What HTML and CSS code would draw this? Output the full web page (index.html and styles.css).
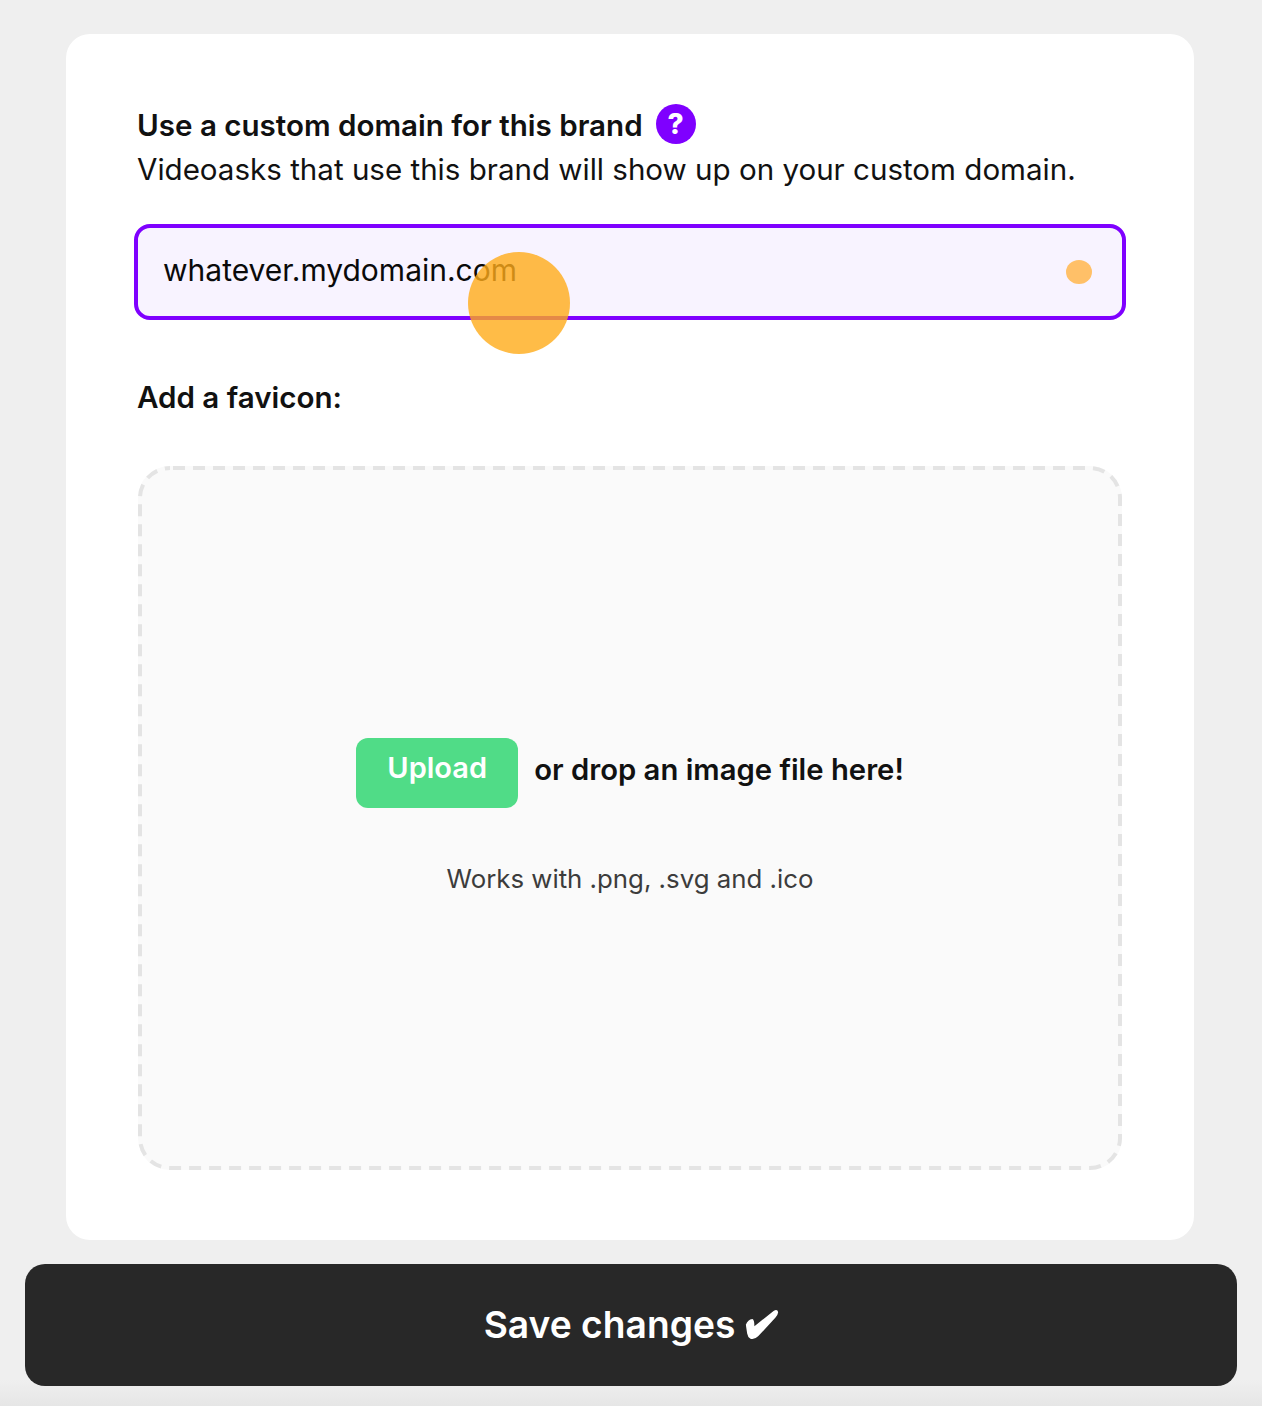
FILE: index.html
```html
<!DOCTYPE html>
<html lang="en">
<head>
<meta charset="utf-8">
<title>Custom domain</title>
<link rel="stylesheet" href="styles.css">
</head>
<body>
<main class="page">
  <section class="card">
    <div class="title-row">
      <h2 class="label">Use a custom domain for this brand</h2>
      <span class="help">?</span>
    </div>
    <p class="desc">Videoasks that use this brand will show up on your custom domain.</p>
    <div class="input-wrap">
      <div class="input">
        <span class="input-text">whatever.mydomain.com</span>
        <span class="dot"></span>
      </div>
      <span class="touch"></span>
    </div>
    <h2 class="label favicon">Add a favicon:</h2>
    <div class="drop">
      <svg class="drop-border" width="984" height="704" viewBox="0 0 984 704" aria-hidden="true">
        <rect x="2" y="2" width="980" height="700" rx="30" ry="30"></rect>
      </svg>
      <div class="drop-row">
        <button class="upload" type="button">Upload</button>
        <span class="drop-text">or drop an image file here!</span>
      </div>
      <p class="hint">Works with .png, .svg and .ico</p>
    </div>
  </section>
  <button class="save" type="button">Save changes<svg class="check" width="34" height="31" viewBox="30 26 102 94" aria-hidden="true"><path d="M32 74 Q38 58 52 56 Q58 58 58 78 L116 32 Q128 25 130 36 Q129 44 122 52 L70 108 Q58 120 46 116 Q38 112 36 100 Z"></path></svg></button>
</main>
</body>
</html>
```

FILE: styles.css
```css
* { box-sizing: border-box; }
html, body { margin: 0; height: 100%; }
body {
  background: linear-gradient(#efefef 0, #efefef 1380px, #e6e6e6 1406px);
  font-family: Inter, "Liberation Sans", sans-serif;
  color: #111;
}
.page {
  width: 1262px;
  height: 1406px;
  padding: 34px 25px 0;
  display: flex;
  flex-direction: column;
  align-items: flex-start;
  overflow: hidden;
}
.card {
  width: 1128px;
  height: 1206px;
  margin-left: 41px;
  background: #fff;
  border-radius: 24px;
  padding: 70px 71px 0;
  flex: none;
}
.title-row {
  display: flex;
  align-items: center;
  gap: 13px;
  height: 40px;
}
.label {
  margin: 0;
  font-size: 29.55px;
  line-height: 40px;
  font-weight: 600;
  color: #111;
  position: relative;
  top: 1px;
}
.help {
  width: 40px;
  height: 40px;
  border-radius: 50%;
  background: #7f00ff;
  color: #fff;
  font-size: 28px;
  font-weight: 800;
  line-height: 40px;
  text-align: center;
}
.desc {
  margin: 5px 0 0;
  font-size: 29.55px;
  line-height: 40px;
  color: #111;
}
.input-wrap {
  position: relative;
  margin: 35px 0 0 -3px;
  width: 992px;
}
.input {
  height: 96px;
  border: 4px solid #7f00ff;
  border-radius: 16px;
  background: #f8f3ff;
  display: flex;
  align-items: center;
  justify-content: space-between;
  padding: 0 30px 0 25px;
}
.input-text {
  font-size: 30px;
  line-height: 40px;
  color: #0a0a0a;
  position: relative;
  top: -2px;
}
.dot {
  width: 26px;
  height: 24px;
  border-radius: 50%;
  background: #ffc068;
}
.touch {
  position: absolute;
  left: 334px;
  top: 28px;
  width: 102px;
  height: 102px;
  border-radius: 50%;
  background: rgba(255, 171, 25, 0.8);
}
.favicon { margin-top: 58px; top: -1px; }
.drop {
  position: relative;
  margin: 48px 0 0 1px;
  width: 984px;
  height: 704px;
  border-radius: 32px;
  background: #fafafa;
  display: flex;
  flex-direction: column;
  align-items: center;
  padding-top: 272px;
}
.drop-border {
  position: absolute;
  left: 0;
  top: 0;
}
.drop-border rect {
  fill: none;
  stroke: #e4e4e4;
  stroke-width: 4;
  stroke-dasharray: 12 8;
  stroke-dashoffset: -3;
}
.drop-row {
  display: flex;
  align-items: center;
  gap: 16px;
  position: relative;
}
.upload {
  width: 162px;
  height: 70px;
  border: 0;
  border-radius: 12px;
  background: #50dc87;
  color: #fff;
  font: 600 29px/1 Inter, "Liberation Sans", sans-serif;
  padding: 0 0 12px;
}
.drop-text {
  font-size: 29.25px;
  line-height: 40px;
  font-weight: 600;
  color: #111;
  position: relative;
  top: -3px;
}
.hint {
  margin: 51px 0 0;
  font-size: 25.8px;
  line-height: 40px;
  color: #3c3c3c;
}
.save {
  margin-top: 24px;
  width: 1212px;
  height: 122px;
  flex: none;
  border: 0;
  border-radius: 20px;
  background: #282828;
  color: #fff;
  font: 600 37.2px/1 Inter, "Liberation Sans", sans-serif;
  display: flex;
  align-items: center;
  justify-content: center;
  gap: 10px;
  padding: 0 0 0 1px;
}
.check {
  fill: #fff;
  margin-top: -1px;
}
```
